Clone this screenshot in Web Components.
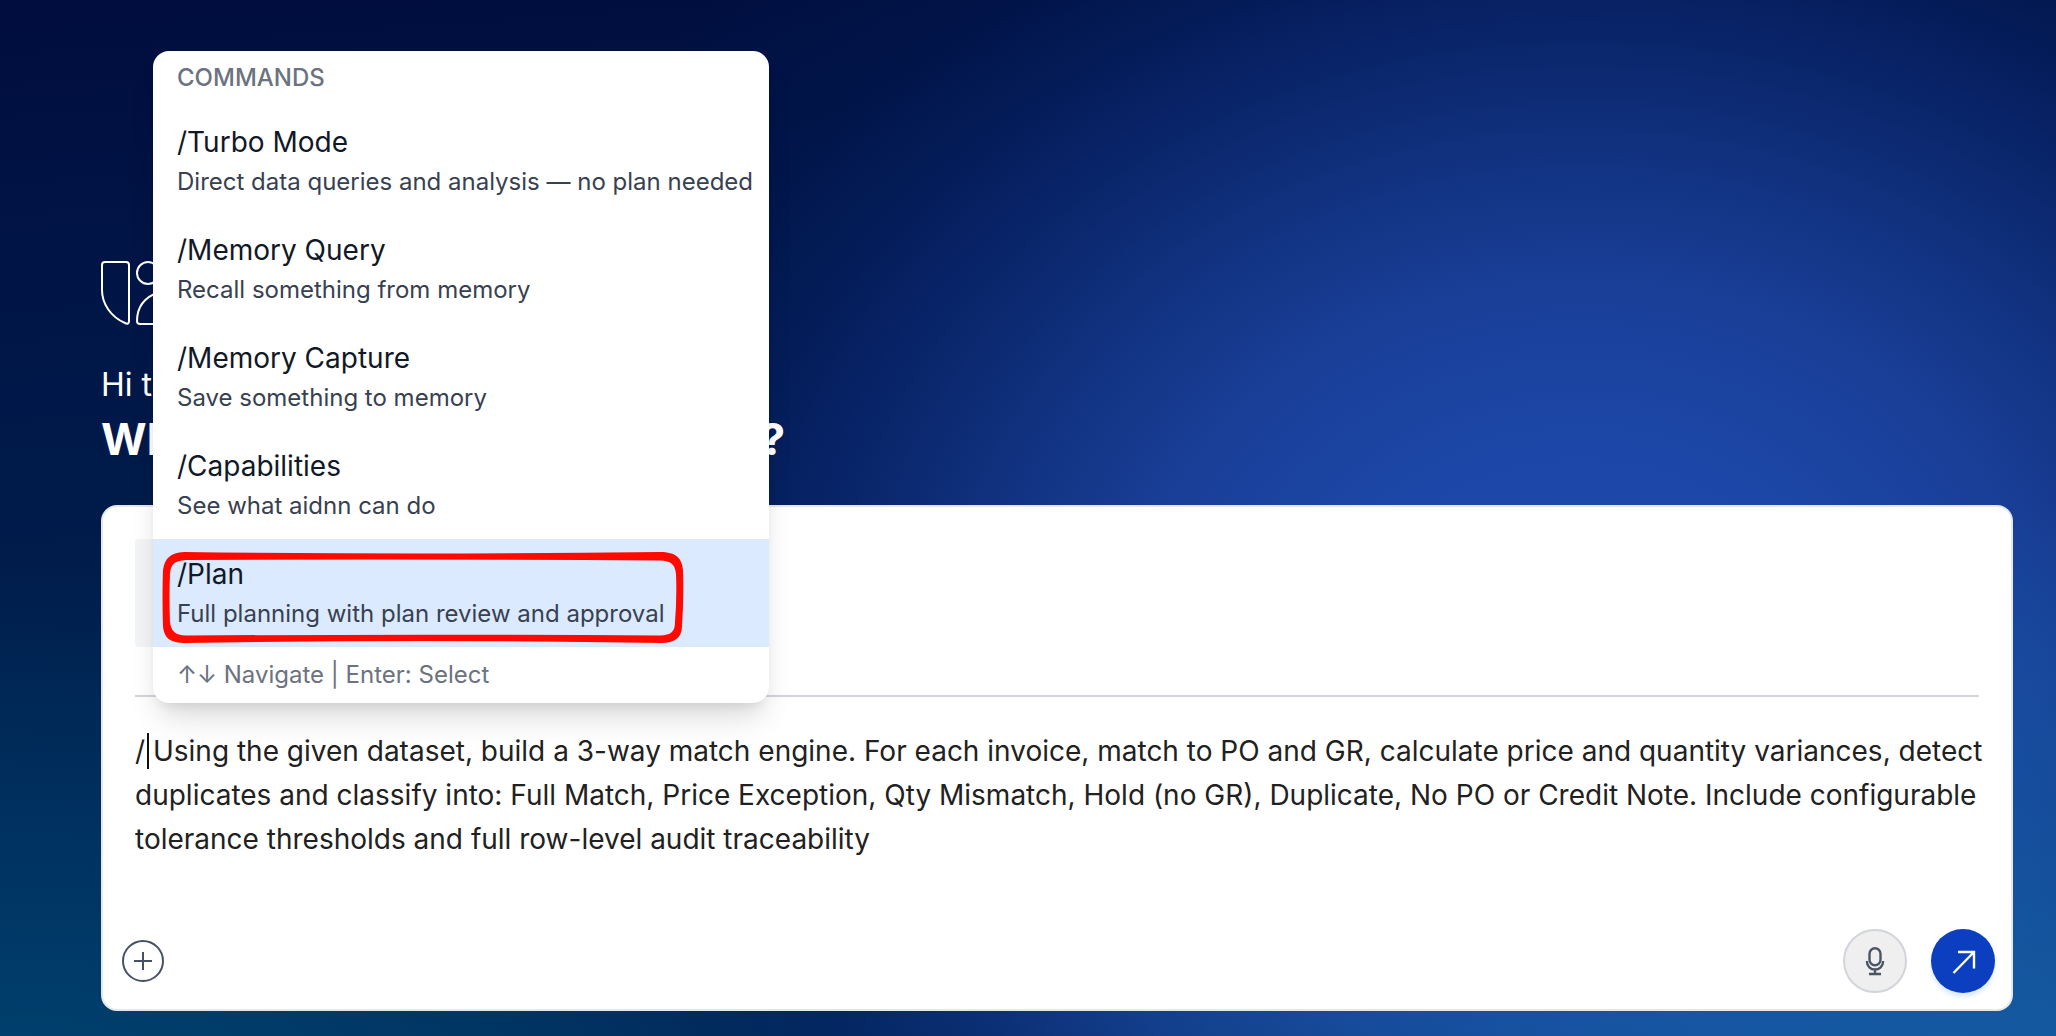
<!DOCTYPE html>
<html lang="en">
<head>
<meta charset="utf-8">
<title>aidnn</title>
<style>
  body { margin: 0; font-family: Inter, "Liberation Sans", sans-serif; }
</style>
</head>
<body>
<chat-home>
  <brand-mark slot="hero"></brand-mark>
  <hero-greeting slot="hero">
    <span slot="hello">Hi t</span>
    <span slot="question">Wh</span>
    <span slot="end">?</span>
  </hero-greeting>
  <prompt-composer>
    <command-menu slot="menu">
      <command-item><span slot="name">/Turbo Mode</span>Direct data queries and analysis — no plan needed</command-item>
      <command-item><span slot="name">/Memory Query</span>Recall something from memory</command-item>
      <command-item><span slot="name">/Memory Capture</span>Save something to memory</command-item>
      <command-item><span slot="name">/Capabilities</span>See what aidnn can do</command-item>
      <command-item selected><span slot="name">/Plan</span>Full planning with plan review and approval</command-item>
    </command-menu>
  </prompt-composer>
</chat-home>

<script>
function define(name, html) {
  const template = document.createElement('template');
  template.innerHTML = '<style>*{box-sizing:border-box}</style>' + html;
  customElements.define(name, class extends HTMLElement {
    constructor() {
      super();
      this.attachShadow({ mode: 'open' }).append(template.content.cloneNode(true));
    }
  });
}

define('chat-home', `
  <style>
    :host {
      display: flex; flex-direction: column; justify-content: flex-end;
      box-sizing: border-box; min-height: 100vh; padding: 24px 43px 25px 101px;
      background:
        radial-gradient(ellipse 50% 58% at 0% 112%, rgba(0,78,124,.8), rgba(0,60,110,0) 100%),
        radial-gradient(ellipse 60% 60% at 100% 108%, rgba(20,98,168,.95), rgba(20,90,165,0) 100%),
        radial-gradient(ellipse 52% 86% at 77% 64%, #1f4bae 0%, #1d48aa 22%, #193f98 42%, rgba(19,52,132,.97) 56%, rgba(11,40,112,.92) 69%, rgba(6,32,98,.75) 80%, rgba(3,26,84,.4) 92%, rgba(0,16,70,0) 110%),
        linear-gradient(176deg, #000d3e 0%, #001748 30%, #001f4d 60%, #002858 100%);
    }
    header { display: flex; flex-direction: column; margin-bottom: 36px; }
  </style>
  <header><slot name="hero"></slot></header>
  <slot></slot>`);

define('brand-mark', `
  <style>
    :host { display: block; height: 64px; margin-bottom: 36px; }
    svg { display: block; }
  </style>
  <svg width="96" height="64" viewBox="0 0 96 64" fill="none" stroke="#fff" stroke-width="2" stroke-linejoin="round">
    <path d="M4 1H25Q28 1 28 4V60Q28 64 24 62C10 56 1 43 1 29V4Q1 1 4 1Z"/>
    <circle cx="47" cy="12" r="11"/>
    <path d="M36 60C36 46 44 36 58 31V60Q58 63 55 63H39Q36 63 36 60Z"/>
  </svg>`);

define('hero-greeting', `
  <style>
    :host { display: flex; flex-direction: column; color: #fff; }
    p { margin: 0; font-size: 32px; line-height: 48px; }
    h1 { display: flex; justify-content: space-between; width: 684px; margin: 0; font-size: 44px; line-height: 60px; font-weight: 700; }
    .start { width: 52px; overflow: hidden; }
  </style>
  <p><slot name="hello"></slot></p>
  <h1><span class="start"><slot name="question"></slot></span><slot name="end"></slot></h1>`);

define('prompt-composer', `
  <style>
    :host {
      display: flex; flex-direction: column; position: relative;
      background: #fff; border: 2px solid #e5e7eb; border-radius: 16px;
    }
    .body { display: flex; flex-direction: column; padding: 32px 32px 0; }
    .attachment { width: 320px; height: 108px; border-radius: 4px; background: #f3f4f6; margin-bottom: 48px; }
    hr { width: 100%; height: 2px; margin: 0 0 32px; border: 0; background: #d1d5db; }
    .field { display: flex; position: relative; margin-right: -16px; }
    textarea {
      flex: 1; height: 176px; padding: 0; border: 0; outline: 0; resize: none; overflow: hidden;
      background: transparent; color: #212121; font: 400 28px/44px Inter, "Liberation Sans", sans-serif;
    }
    .caret { position: absolute; left: 12px; top: 4px; width: 2px; height: 36px; background: #111; }
    footer { display: flex; align-items: center; gap: 24px; padding: 24px 16px 16px 19px; }
    button { display: grid; place-items: center; padding: 0; border-radius: 50%; }
    .add { width: 42px; height: 42px; margin-right: auto; border: 2px solid #475066; background: #fff; color: #475066; }
    .mic, .send { width: 64px; height: 64px; }
    .mic { border: 2px solid #d1d5db; background: #efefef; color: #4b5563; }
    .send { border: 0; background: #0b3fc0; color: #fff; box-shadow: 0 4px 4px #dbeafe; }
  </style>
  <div class="body">
    <div class="attachment"></div>
    <hr>
    <div class="field">
      <textarea aria-label="Prompt" spellcheck="false">/ Using the given dataset, build a 3-way match engine. For each invoice, match to PO and GR, calculate price and quantity variances, detect duplicates and classify into: Full Match, Price Exception, Qty Mismatch, Hold (no GR), Duplicate, No PO or Credit Note. Include configurable tolerance thresholds and full row-level audit traceability</textarea>
      <span class="caret"></span>
    </div>
  </div>
  <footer>
    <button class="add" aria-label="Add attachment">
      <svg width="18" height="18" viewBox="0 0 18 18" stroke="currentColor" stroke-width="2" fill="none"><path d="M9 0V18M0 9H18"/></svg>
    </button>
    <button class="mic" aria-label="Dictate">
      <svg width="20" height="30" viewBox="0 0 20 30" stroke="currentColor" stroke-width="2.4" fill="none"><rect x="4.500" y="2.200" width="11" height="17" rx="5.500"/><path d="M2 15V16A8 7.500 0 0 0 18 16V15M10 23.500V28M4 28H16"/></svg>
    </button>
    <button class="send" aria-label="Send">
      <svg width="26" height="26" viewBox="0 0 26 26" stroke="currentColor" stroke-width="2.4" fill="none"><path d="M3.500 25L23.500 4.500M8 4H24V20.500"/></svg>
    </button>
  </footer>
  <slot name="menu"></slot>`);

define('command-menu', `
  <style>
    :host {
      position: absolute; left: 50px; top: -456px; width: 616px;
      display: flex; flex-direction: column; border-radius: 16px; background: #fff;
      box-shadow: 0 20px 30px -6px rgba(0,0,0,.14), 0 8px 12px -6px rgba(0,0,0,.1);
      font-size: 24px; line-height: 32px; color: #6b7280;
    }
    header { padding: 11px 24px 13px; font-weight: 500; }
    footer { padding: 12px 24px; }
    .list { position: relative; display: flex; flex-direction: column; }
    .mark { position: absolute; left: 9px; bottom: 4px; overflow: visible; }
  </style>
  <header>COMMANDS</header>
  <div class="list" role="listbox" aria-label="Commands">
    <slot></slot>
    <svg class="mark" width="522" height="91" viewBox="0 0 522 91" fill="#ff0a00" fill-rule="evenodd">
      <path d="M22 0Q260 3 498 0C514 0 520 6 521 18Q522 45 520 74C520 86 512 91 500 91Q260 87 24 91C8 91 2 86 1 74Q0 45 1 18C3 6 8 1 22 0ZM24 8C12 9 9 12 8 22Q7 45 8 70C9 79 13 83 24 83.500Q260 82 498 83.500C509 83 513 80 513 70Q515 45 514 22C513 12 509 9 498 8.500Q260 7 24 8Z"/>
    </svg>
  </div>
  <footer>↑↓ Navigate | Enter: Select</footer>`);

define('command-item', `
  <style>
    :host { display: block; }
    button {
      display: flex; flex-direction: column; align-items: flex-start; gap: 4px;
      width: 100%; padding: 15px 24px 17px; border: 0; background: transparent;
      font-family: inherit; text-align: left; white-space: nowrap;
    }
    :host([selected]) button { background: #dbeafe; }
    .name { font-size: 28px; line-height: 40px; color: #111827; }
    .hint { font-size: 24px; line-height: 32px; color: #374151; }
  </style>
  <button role="option">
    <span class="name"><slot name="name"></slot></span>
    <span class="hint"><slot></slot></span>
  </button>`);
</script>
</body>
</html>
